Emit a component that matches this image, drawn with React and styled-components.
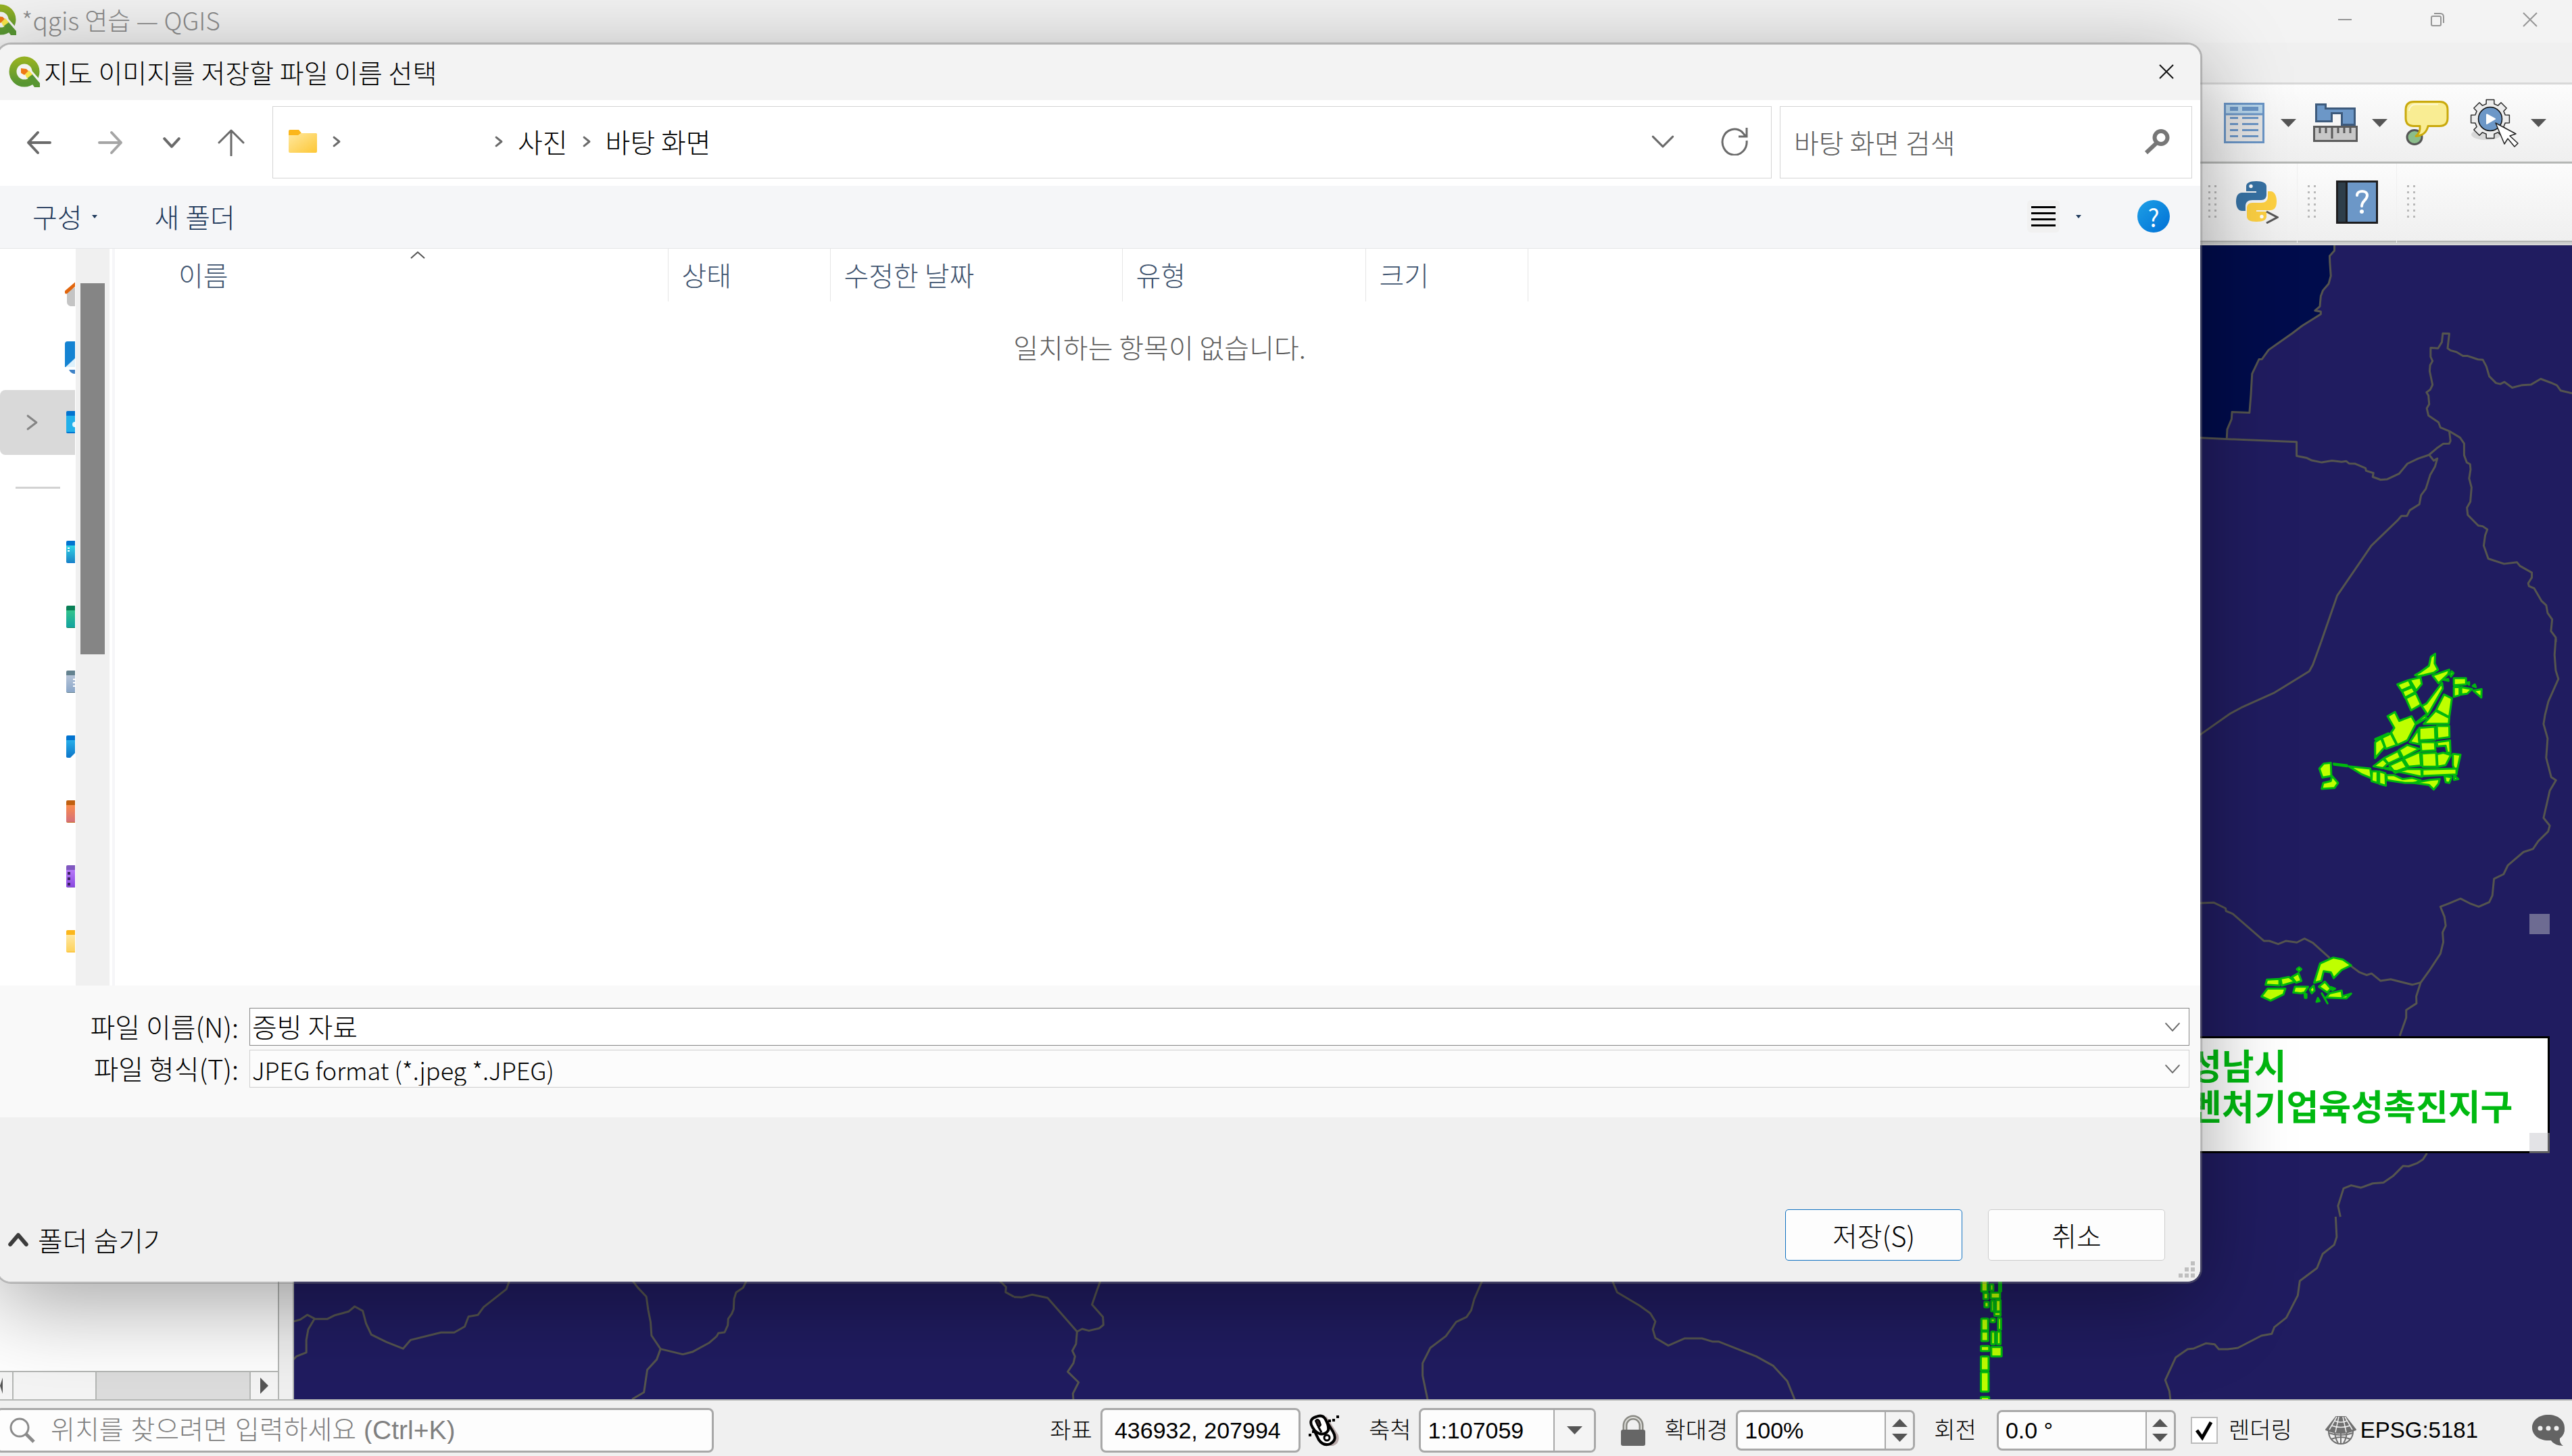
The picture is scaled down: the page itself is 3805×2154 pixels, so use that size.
import React from "react";
import styled, { createGlobalStyle } from "styled-components";

const UI_FONT = `"Noto Sans CJK KR", "Noto Sans", sans-serif`;
const QT_FONT = `"Liberation Sans", "Noto Sans CJK KR", sans-serif`;

const GREY_LINE = "#b5b7b5";
const FIELD_LINE = "#a8a8a8";
const GLYPH = "#6a6a6a";

const GlobalStyle = createGlobalStyle`
  * {
    box-sizing: border-box;
  }

  body {
    margin: 0;
    background: #f0f0f0;
    font-family: ${UI_FONT};
    font-size: 40px;
    font-weight: 300;
    line-height: 56px;
    color: #000;
  }

  button, input, select {
    margin: 0;
    padding: 0;
    border: 0;
    background: none;
    color: inherit;
    font: inherit;
  }

  svg {
    display: block;
    flex: none;
  }
`;

const Page = styled.div`
  position: relative;
  display: flex;
  flex-direction: column;
  min-height: 100vh;
  overflow: hidden;
`;

/* ---------- main window ---------- */

const TitleBar = styled.header`
  display: flex;
  align-items: center;
  height: 63px;
  padding-bottom: 6px;
  background: #f3f3f3;
  color: #8c8c8c;
`;

const MainTitle = styled.h1`
  flex: 1;
  display: flex;
  align-items: center;
  gap: 8px;
  margin: 0 0 0 -22px;
  font-size: 37px;
  font-weight: 300;
`;

const WindowControls = styled.div`
  display: flex;
  gap: 13px;
`;

const WindowButton = styled.button`
  display: flex;
  justify-content: center;
  align-items: center;
  width: ${(props) => props.$width || 124}px;
  height: 56px;
`;

const MenuBar = styled.div`
  height: 62px;
  background: #f0f0f0;
  border-bottom: 3px solid #d8d8d8;
`;

const Toolbar = styled.div`
  display: flex;
  justify-content: flex-end;
  align-items: center;
  gap: 25px;
  height: 117px;
  padding-right: 38px;
  background: linear-gradient(#fcfcfc, #efefef);
  border-bottom: 3px solid ${GREY_LINE};
`;

const ToolGroup = styled.div`
  display: flex;
  align-items: center;
  gap: ${(props) => (props.$last ? 18 : 21)}px;
  margin-left: ${(props) => (props.$last ? 6 : 0)}px;
`;

const IconButton = styled.button`
  display: flex;
  align-items: center;
  justify-content: center;
`;

const PluginBar = styled.div`
  display: flex;
  gap: 1px;
  height: 121px;
  padding-bottom: 1px;
  background: #f0f0f0;
  border-bottom: 3px double ${GREY_LINE};
`;

const PluginSection = styled.div`
  flex: ${(props) => (props.$fill ? "1" : "none")};
  width: ${(props) => props.$width || 146}px;
  display: flex;
  align-items: center;
  justify-content: space-between;
  padding: 0 27px 0 15px;
  background: linear-gradient(#fcfcfc, #efefef);
  border-bottom: 3px solid ${GREY_LINE};
`;

const Body = styled.main`
  flex: 1;
  display: flex;
  min-height: 0;
`;

const LayerPanel = styled.aside`
  display: flex;
  flex-direction: column;
  justify-content: flex-end;
  width: 413px;
  background: #fff;
  border-right: 2px solid ${GREY_LINE};
`;

const Splitter = styled.div`
  width: 22px;
  background: #f0f0f0;
  border-right: 2px solid ${GREY_LINE};
`;

const HScroll = styled.div`
  display: flex;
  height: 42px;
  border-top: 2px solid ${GREY_LINE};
  background: #dcdcdc;
`;

const HScrollThumb = styled.div`
  width: 123px;
  background: #f4f4f4;
  border-right: 2px solid ${GREY_LINE};
`;

const HScrollButton = styled.button`
  display: flex;
  align-items: center;
  justify-content: ${(props) => (props.$left ? "flex-start" : "center")};
  width: ${(props) => (props.$left ? 20 : 42)}px;
  margin-left: ${(props) => (props.$left ? 0 : "auto")};
  background: #f4f4f4;
  border: 0 solid ${GREY_LINE};
  border-width: ${(props) => (props.$left ? "0 2px 0 0" : "0 0 0 2px")};
`;

const MapCanvas = styled.section`
  position: relative;
  flex: 1;
  overflow: hidden;
  background: #201c60;
`;

const MapSvg = styled.svg`
  position: absolute;
  inset: 0;
  width: 100%;
  height: 100%;
`;

const MapLegend = styled.div`
  position: absolute;
  top: 1170px;
  right: 33px;
  width: 560px;
  height: 173px;
  padding: 9px 24px;
  background: #fff;
  border: 3px solid #000;
  color: #00b910;
  font-size: 52px;
  font-weight: 700;
  line-height: 60px;
  white-space: nowrap;
`;

const Handle = styled.i`
  position: absolute;
  right: 33px;
  top: ${(props) => props.$top}px;
  width: 30px;
  height: 30px;
  background: rgba(196, 196, 202, 0.475);
`;

/* ---------- status bar ---------- */

const StatusBar = styled.footer`
  display: flex;
  align-items: center;
  height: 84px;
  padding: 6px 9px 0 0;
  background: #f0f0f0;
  border-top: 2px solid ${GREY_LINE};
  font-family: ${QT_FONT};
  font-size: 34px;
  line-height: 40px;
  white-space: nowrap;
`;

const Framed = styled.div`
  display: flex;
  align-items: stretch;
  width: ${(props) => props.$width}px;
  height: ${(props) => props.$height || 66}px;
  background: #fdfdfd;
  border: 3px solid ${FIELD_LINE};
  border-radius: 8px;
  overflow: hidden;
`;

const Locator = styled(Framed)`
  flex: 0 1 1062px;
  align-items: center;
  gap: 23px;
  margin: 0 auto 0 -6px;
  padding-left: 17px;
  color: #808080;
  font-size: 39px;

  input {
    flex: 1;
    min-width: 0;
  }

  input::placeholder {
    color: #808080;
    opacity: 1;
  }
`;

const StatusItem = styled.div`
  display: flex;
  align-items: center;
  gap: ${(props) => props.$gap || 12}px;
  margin-left: ${(props) => props.$before}px;
`;

const CrsButton = styled.button`
  display: flex;
  align-items: center;
  gap: 6px;
  margin-left: 49px;
  font-size: 33px;
`;

const StatusInput = styled.input`
  flex: 1;
  min-width: 0;
  padding-left: ${(props) => props.$pad || 10}px;
`;

const ScaleSelect = styled.select`
  flex: 1;
  min-width: 0;
  padding-left: 10px;
  appearance: none;
`;

const StepColumn = styled.span`
  display: flex;
  flex-direction: column;
  align-items: center;
  justify-content: center;
  gap: 10px;
  width: ${(props) => props.$width || 42}px;
  border-left: 2px solid ${FIELD_LINE};
  background: #f4f4f4;
`;

const CheckWrap = styled.span`
  position: relative;
  width: 40px;
  height: 40px;

  svg {
    position: absolute;
    inset: 0;
    pointer-events: none;
  }
`;

const CheckInput = styled.input`
  display: block;
  width: 40px;
  height: 40px;
  appearance: none;
  background: #fff;
  border: 2px solid #bcbcbc;
`;

/* ---------- save dialog ---------- */

const Dialog = styled.section`
  position: absolute;
  top: 63px;
  right: 547px;
  bottom: 255px;
  left: -6px;
  display: flex;
  flex-direction: column;
  padding-left: 3px;
  overflow: hidden;
  background: #fff;
  background-clip: padding-box;
  border: 3px solid rgba(110, 110, 110, 0.45);
  border-radius: 22px;
  box-shadow: 0 30px 130px rgba(0, 0, 0, 0.36);
`;

const DialogTitleBar = styled.div`
  display: flex;
  align-items: center;
  justify-content: space-between;
  height: 82px;
  padding: 0 0 2px 13px;
  background: #f3f3f3;
`;

const DialogTitle = styled.h2`
  display: flex;
  align-items: center;
  gap: 6px;
  margin: 0;
  font-size: 39px;
  font-weight: 300;
`;

const NavBar = styled.nav`
  display: flex;
  align-items: center;
  height: 127px;
  padding: 0 12px 2px 5px;
`;

const NavButton = styled.button`
  display: flex;
  align-items: center;
  justify-content: center;
  width: ${(props) => props.$width}px;
  height: 84px;
`;

const AddressBar = styled.div`
  flex: 1;
  display: flex;
  align-items: center;
  height: 107px;
  margin: 0 12px;
  padding: 0 34px 3px 22px;
  border: 1px solid #d4d4d4;
`;

const Crumb = styled.button`
  margin: 0 24px 0 24px;
`;

const CrumbGap = styled.span`
  width: ${(props) => props.$width}px;
`;

const AddressTools = styled.div`
  display: flex;
  align-items: center;
  gap: 71px;
  margin-left: auto;
`;

const SearchBox = styled.label`
  display: flex;
  align-items: center;
  width: 610px;
  height: 107px;
  padding: 0 32px 2px 20px;
  border: 1px solid #d4d4d4;

  input {
    flex: 1;
    min-width: 0;
  }

  input::placeholder {
    color: #5d5d5d;
    opacity: 1;
  }
`;

const CommandBar = styled.div`
  display: flex;
  align-items: center;
  height: 93px;
  padding: 0 45px 2px 48px;
  background: #f5f6f8;
  border-bottom: 1px solid #e4e6e8;
  color: #1e395b;
`;

const CommandButton = styled.button`
  display: flex;
  align-items: center;
  gap: 14px;
  margin-right: 85px;
`;

const ViewButton = styled.button`
  display: flex;
  align-items: center;
  gap: 24px;
  margin: 0 83px 0 auto;

  span {
    display: flex;
    align-items: center;
    justify-content: center;
    width: 48px;
    height: 48px;
    border-radius: 6px;
    background: #f1f1f1;
  }
`;

const HelpButton = styled.button`
  width: 48px;
  height: 48px;
  border-radius: 50%;
  background: linear-gradient(135deg, #1ea0e6, #0070d6);
  color: #fff;
  font-size: 36px;
  font-weight: 400;
  line-height: 48px;
`;

const Explorer = styled.div`
  flex: 1;
  display: flex;
  min-height: 0;
`;

const Places = styled.ul`
  flex: none;
  width: 111px;
  margin: 0 1px 0 0;
  padding: 17px 0 0;
  overflow: hidden;
  list-style: none;
`;

const Place = styled.li`
  display: flex;
  align-items: center;
  justify-content: flex-end;
  height: 96px;
  border-radius: 8px 0 0 8px;
  background: ${(props) => (props.$selected ? "#d9d9d9" : "none")};
  gap: 43px;
`;

const PlaceRule = styled.li`
  height: 96px;
  padding: 47px 22px 0 23px;

  hr {
    height: 3px;
    margin: 0;
    border: 0;
    background: #d2d2d2;
  }
`;

const VScroll = styled.div`
  flex: none;
  width: 50px;
  margin-right: 4px;
  padding: 51px 7px 0;
  background: #f0f0f0;
`;

const VScrollThumb = styled.div`
  height: 549px;
  background: #858585;
`;

const FilePane = styled.div`
  flex: 1;
  border-left: 4px solid #f6f6f8;
`;

const FileTable = styled.table`
  width: 100%;
  table-layout: fixed;
  border-collapse: collapse;

  th {
    position: relative;
    height: 78px;
    padding: 0 0 2px 20px;
    border-right: 1px solid #e5e5e5;
    color: #3f546f;
    font-weight: 300;
    text-align: left;
  }

  th:first-child {
    padding-left: 94px;
  }

  th:last-child {
    border-right: 0;
  }

  td {
    padding: 39px 0 0 6px;
    color: #5d5d5d;
    text-align: center;
  }
`;

const SortMark = styled.svg`
  position: absolute;
  top: 4px;
  left: 437px;
`;

const FieldGrid = styled.div`
  display: grid;
  grid-template-columns: 353px 1fr;
  gap: 6px 16px;
  padding: 33px 16px 44px 0;
  background: #f9f9f9;

  label {
    text-align: right;
    line-height: 54px;
  }
`;

const ComboBox = styled.div`
  position: relative;
  display: flex;
  height: 56px;
  padding-bottom: 2px;
  background: ${(props) => (props.$light ? "#fcfcfc" : "#fff")};
  border: 1px solid ${(props) => (props.$light ? "#cfcfcf" : "#868686")};

  input, select {
    flex: 1;
    padding-left: 3px;
    appearance: none;
  }

  select {
    font-size: 36px;
  }

  svg {
    position: absolute;
    top: 22px;
    right: 14px;
    pointer-events: none;
  }
`;

const DialogFooter = styled.div`
  position: relative;
  display: flex;
  align-items: flex-end;
  height: 243px;
  padding: 0 52px 31px 15px;
  background: #f0f0f0;
`;

const FolderToggle = styled.button`
  display: flex;
  align-items: center;
  gap: 17px;
  margin-right: auto;
  padding-bottom: 3px;

  span {
    width: 180px;
    overflow: hidden;
    text-align: left;
    white-space: nowrap;
  }
`;

const PushButton = styled.button`
  width: 262px;
  height: 76px;
  margin-left: 38px;
  background: #fdfdfd;
  border: 1px solid ${(props) => (props.$primary ? "#0f70c0" : "#cccccc")};
  border-radius: 5px;
`;

const SizeGrip = styled.svg`
  position: absolute;
  right: 8px;
  bottom: 6px;
`;

/* ---------- icons ---------- */

const QgisLogo = ({ id }) => (
  <svg width="46" height="46" viewBox="0 0 46 46">
    <defs>
      <linearGradient id={id} x1="0" y1="0" x2="0" y2="1">
        <stop offset="0" stopColor="#93b023" />
        <stop offset="1" stopColor="#589632" />
      </linearGradient>
    </defs>
    <circle cx="23" cy="23" r="17" fill="none" stroke={`url(#${id})`} strokeWidth="11" />
    <path fill="#f3f3f3" d="M23 24l8-6 15 17v11h-4z" />
    <path fill="#589632" d="M27 31l7-5 12 14v6h-8z" />
    <path fill="#f7e64a" d="M24 27l6-6 5 6-8 6z" />
    <path fill="#ee7913" d="M18 18l8 1 3 3-6 6-5-3z" />
  </svg>
);

const Chevron = ({ dir = "down", width, height, color = GLYPH, stroke = 3 }) => {
  const d = {
    down: "M1 1L50 99L99 1",
    up: "M1 99L50 1L99 99",
    right: "M1 1L99 50L1 99",
  }[dir];
  return (
    <svg width={width} height={height} viewBox="0 0 100 100" preserveAspectRatio="none" overflow="visible">
      <path d={d} fill="none" stroke={color} strokeWidth={stroke} strokeLinecap="round" strokeLinejoin="round" vectorEffect="non-scaling-stroke" />
    </svg>
  );
};

const Triangle = ({ dir = "down", width = 23, height = 12, color = "#555" }) => {
  const points = {
    down: "0,0 100,0 50,100",
    up: "0,100 100,100 50,0",
    right: "0,0 100,50 0,100",
    left: "100,0 100,100 0,50",
  }[dir];
  return (
    <svg width={width} height={height} viewBox="0 0 100 100" preserveAspectRatio="none">
      <polygon points={points} fill={color} />
    </svg>
  );
};

const Arrow = ({ dir, color = GLYPH }) => (
  <svg width="40" height="40" viewBox="0 0 40 40" fill="none" stroke={color} strokeWidth="4" strokeLinecap="round" strokeLinejoin="round">
    {dir === "left" && <path d="M18 5L4 20L18 35M4 20H36" />}
    {dir === "right" && <path d="M22 5L36 20L22 35M36 20H4" />}
    {dir === "up" && <path strokeWidth="3" d="M2 20L20 2L38 20M20 2V39" />}
  </svg>
);

const Cross = ({ color }) => (
  <svg width="22" height="22" viewBox="0 0 22 22" stroke={color} strokeWidth="2">
    <path d="M1 1L21 21M21 1L1 21" />
  </svg>
);

const DragHandle = () => (
  <svg width="13" height="50" viewBox="0 0 13 50" fill="#b9b9b9">
    {[0, 9, 18, 27, 36, 45].map((y) => (
      <path key={y} d={`M0 ${y}h3v3h-3zM9 ${y}h3v3h-3z`} />
    ))}
  </svg>
);

const TableIcon = () => (
  <svg width="66" height="66" viewBox="0 0 66 66">
    <path fill="#e4e4e4" d="M4 4h58v59H4z" />
    <path fill="#b6d4ea" d="M4 4h58v16H4z" />
    <path fill="none" stroke="#6a95c6" strokeWidth="3" d="M4.500 4.500h57v57h-57zM4 20h58" />
    <path fill="#6a95c6" d="M12 9h12v6H12zM30 9h24v6H30zM12 24h12v3H12zM30 24h24v3H30zM12 33h12v3H12zM30 33h24v3H30zM12 42h12v3H12zM30 42h24v3H30zM12 51h12v3H12zM30 51h24v3H30z" />
  </svg>
);

const MeasureIcon = () => (
  <svg width="66" height="66" viewBox="0 0 66 66">
    <path fill="#6c97c7" stroke="#3d5a7c" strokeWidth="3" d="M4.500 5.500h14v6h43v24H42.500V18.500h-15v12h-23z" />
    <path fill="#c8c8c8" stroke="#5b5b5b" strokeWidth="3" d="M1.500 38.500h63v21h-63z" />
    <path stroke="#5b5b5b" strokeWidth="3" d="M10 39v9M19 39v9M28 39v17M37 39v9M46 39v9M55 39v9" />
  </svg>
);

const MapTipIcon = () => (
  <svg width="66" height="66" viewBox="0 0 66 66">
    <ellipse cx="15" cy="54" rx="11" ry="10.500" fill="#8bbd8b" stroke="#555" strokeWidth="3" />
    <path fill="#f9ed93" stroke="#c9a90c" strokeWidth="3" strokeLinejoin="round" d="M14 1.500h38q12 0 12 12v12q0 12-12 12H35q-3 14-18 15q7-5 6-15h-9q-12 0-12-12v-12q0-12 12-12z" />
    <path fill="none" stroke="#fdf8d0" strokeWidth="2" d="M7 15q1-9 9-9.500h34" />
  </svg>
);

const gearPath = (cx, cy, outer, inner, teeth) => {
  const pts = [];
  for (let i = 0; i < teeth; i++) {
    const a = (i / teeth) * Math.PI * 2 - Math.PI / 2;
    [
      [-0.26, inner],
      [-0.2, outer],
      [0.2, outer],
      [0.26, inner],
    ].forEach(([da, r]) => {
      pts.push(`${(cx + Math.cos(a + da) * r).toFixed(1)} ${(cy + Math.sin(a + da) * r).toFixed(1)}`);
    });
  }
  return `M${pts.join("L")}Z`;
};

const ActionIcon = () => (
  <svg width="72" height="72" viewBox="0 0 72 72">
    <ellipse cx="24" cy="53" rx="22" ry="8" fill="#d8d8d8" />
    <path fill="#ececec" stroke="#2c2c2c" strokeWidth="1.500" strokeLinejoin="round" d={gearPath(30, 30, 29, 23, 8)} />
    <circle cx="30" cy="30" r="17.500" fill="#6c97c7" stroke="#111" strokeWidth="1.500" />
    <path fill="#fff" stroke="#fff" strokeWidth="2" strokeLinejoin="round" d="M25 23.500v13.500l12-7z" />
    <path fill="#fff" stroke="#222" strokeWidth="1.500" strokeLinejoin="round" d="M38 36L68 52L59 55L71 66L66 71L56 59L51 67z" />
  </svg>
);

const PythonIcon = () => (
  <svg width="63" height="63" viewBox="0 0 63 63">
    <path fill="#3772a4" d="M30 0C19 0 15 3 15 8v7h15v2H9C3 17 0 22 0 30s3 14 9 14h5v-7c0-6 4-9 10-9h13c5 0 8-3 8-8V8c0-5-5-8-15-8z" />
    <path fill="#fed142" d="M30 60c11 0 15-3 15-8v-7H30v-2h21c6 0 9-5 9-13s-3-15-9-15h-4v8c0 6-4 9-10 9H24c-6 0-8 4-8 8v12c0 5 4 8 14 8z" />
    <circle cx="22" cy="7.500" r="2.700" fill="#fff" />
    <circle cx="38" cy="52.500" r="2.700" fill="#fff" />
    <path fill="none" stroke="#555" strokeWidth="3" d="M45 45l16 8.500L45 62" />
  </svg>
);

const HelpBookIcon = () => (
  <svg width="62" height="64" viewBox="0 0 62 64">
    <path fill="#6c97c7" stroke="#1d1d1f" strokeWidth="3" d="M1.500 1.500h59v61h-59z" />
    <path fill="#2e3e4a" stroke="#1d1d1f" strokeWidth="3" d="M1.500 1.500h14v61h-14z" />
    <path fill="none" stroke="#fff" strokeWidth="4" strokeLinecap="round" d="M31 22c0-8 15-8 15 0c0 7-8 8-8 16" />
    <circle cx="38" cy="46" r="3" fill="#fff" />
  </svg>
);

const FolderIcon = () => (
  <svg width="44" height="36" viewBox="0 0 44 36">
    <defs>
      <linearGradient id="folder" x1="0" y1="0" x2="1" y2="1">
        <stop offset="0" stopColor="#ffe8a0" />
        <stop offset="1" stopColor="#fdc735" />
      </linearGradient>
    </defs>
    <path fill="#fbb61b" d="M1 3q0-2 2-2h13l4 5h20q3 0 3 3v6H1z" />
    <path fill="url(#folder)" d="M1 9h14l4-3h22q2 0 2 2v25q0 2-2 2H3q-2 0-2-2z" />
  </svg>
);

const RefreshIcon = () => (
  <svg width="40" height="42" viewBox="0 0 40 42" fill="none" stroke={GLYPH} strokeWidth="3">
    <path d="M38 20a18 19 0 1 1-7-13l6 7M38 1v13H26" />
  </svg>
);

const SearchKeyIcon = () => (
  <svg width="38" height="38" viewBox="0 0 38 38" fill="none" stroke="#777">
    <circle cx="25" cy="12.500" r="9.500" strokeWidth="6" />
    <path strokeWidth="6" d="M19 20L3 35" />
  </svg>
);

const LensIcon = () => (
  <svg width="38" height="38" viewBox="0 0 38 38" fill="none" stroke="#8a8a8a">
    <circle cx="15" cy="15" r="13" strokeWidth="3" />
    <path strokeWidth="5" d="M24 24L36 36" />
  </svg>
);

const MouseIcon = () => (
  <svg width="46" height="48" viewBox="0 0 46 48">
    <path fill="#b9aaaa" d="M26 3l18 28q3 12-8 16h-14z" />
    <path fill="#fff" stroke="#000" strokeWidth="4" d="M26 10l10 16q7 12-4 18q-10 4-17-6l-6-12z" />
    <path fill="#fff" stroke="#000" strokeWidth="4" d="M4 16q-3-9 7-12q10-4 14 4q5 9 4 16q-4 7-13 5q-8-3-12-13z" />
    <path fill="#2b2020" stroke="#000" strokeWidth="2" d="M10 10q3-4 6 0l2 6q-2 4-5 1z" />
    <path stroke="#000" strokeWidth="3" d="M14 18l5 9" />
    <circle cx="27" cy="35" r="4" fill="#fff" stroke="#000" strokeWidth="3" />
    <path fill="#000" d="M29 8h4v4h-4zM35 7h4v4h-4zM41 2h4v4h-4zM5 24h4v4H5zM0 29h4v4H0z" />
  </svg>
);

const LockIcon = () => (
  <svg width="38" height="46" viewBox="0 0 38 46">
    <path fill="none" stroke="#8a8a84" strokeWidth="7" d="M7 23V16a12 12 0 0 1 24 0v7" />
    <path fill="none" stroke="#dcdcd8" strokeWidth="2" d="M7 23V16a12 12 0 0 1 24 0v7" />
    <rect x="1" y="22" width="36" height="24" rx="3" fill="#666" />
  </svg>
);

const GlobeIcon = () => (
  <svg width="46" height="42" viewBox="0 0 46 42" fill="none" stroke="#707070" strokeWidth="2">
    <ellipse cx="23" cy="23" rx="18" ry="18" />
    <path fill="#707070" d="M16 1h14l15 19q-22 10-44 0z" />
    <path d="M5 25q18 6 36 0M9 34q14-6 28 0M23 22v20M14 22q0 10 5 18M32 22q0 10-5 18" />
    <path stroke="#f0f0f0" strokeWidth="1.500" d="M14 7q9 4 18 0M9 14q14 5 28 0M20 1l-5 23M26 1l5 23M17 1L6 20M29 1l11 19" />
  </svg>
);

const MessageIcon = () => (
  <svg width="50" height="46" viewBox="0 0 50 46">
    <path fill="#636363" d="M24 0C10 0 0 8 0 19s10 19 24 19h4q4 7 18 8q-6-4-5-11q8-6 7-16C48 8 38 0 24 0z" />
    <circle cx="12" cy="20" r="3.500" fill="#f0f0f0" />
    <circle cx="24" cy="20" r="3.500" fill="#f0f0f0" />
    <circle cx="36" cy="20" r="3.500" fill="#f0f0f0" />
  </svg>
);

// only the left edge of each place icon shows beside the scroll bar
const PLACES = [
  { name: "desktop", top: "#0173cf", from: "#2fd3e6", to: "#1a84c6", mark: "M4 13h3v2H4zM4 17h3v2H4z", markColor: "#fff" },
  { name: "downloads", top: "#087f56", from: "#32c38c", to: "#12a3a0" },
  { name: "documents", top: "#64828f", from: "#b6c4d8", to: "#8aa6c8", mark: "M12 15h3v2h-3zM12 20h3v2h-3zM12 25h3v2h-3z", markColor: "#fff" },
  { name: "pictures", top: "#0173cf", from: "#27aee9", to: "#0d77c9", mark: "M8 36L15 29V36z", markColor: "#fff" },
  { name: "music", top: "#c06010", from: "#f98c4d", to: "#d6707a" },
  { name: "videos", top: "#8058c0", from: "#b678f8", to: "#8a48e0", mark: "M4 13h4v4H4zM4 21h4v4H4zM4 29h4v4H4z", markColor: "#3b2560" },
  { name: "folder", top: "#fbb61b", from: "#ffe7a0", to: "#fdd25c" },
];

const PlaceIcon = ({ name, top, from, to, mark, markColor }) => (
  <svg width="14" height="38" viewBox="1 1 14 38">
    <defs>
      <linearGradient id={`place-${name}`} x1="0" y1="0" x2="0" y2="1">
        <stop offset="0" stopColor={from} />
        <stop offset="1" stopColor={to} />
      </linearGradient>
    </defs>
    <rect x="2" y="3" width="30" height="33" rx="2" fill={top} />
    <rect x="2" y="10" width="30" height="25" fill={`url(#place-${name})`} />
    {mark && <path d={mark} fill={markColor} />}
  </svg>
);

/* ---------- map drawing ---------- */

const VIEW = {
  north: "translate(3250 350) scale(0.35398 0.38270)",
  centre: "translate(3250 900) scale(0.35398 0.57405)",
  southEast: "translate(2600 1750) scale(0.76852 0.33333)",
  south: "translate(1500 1860) scale(0.76528 0.33333)",
  southMid: "translate(1060 1890) scale(0.33333)",
  southWest: "translate(0 1460) scale(0.70151 0.44267)",
};

const SEA =
  "M575 34L575 54 555 75 556 100 560 152 551 182 527 208 518 230 514 270 494 286 518 290 518 300 440 345 400 373 300 438 272 474 260 474 231 530 226 610 220 681 147 678 145 706 127 745 125 780";

const BOUNDARIES = {
  north: [
    SEA,
    "M-10 777L210 786 417 794 417 848 460 856 480 865 522 873 565 866 605 871 624 868 636 877 662 878 705 895 707 905 738 914 735 929 768 940 796 938 846 916 880 878 925 858 970 844 1003 818 1030 801 1055 800 1060 790 1055 752",
    "M1055 752L1018 738 1010 718 968 692 961 664 971 648 968 615 960 602 975 592 985 573 973 520 975 497 985 481 977 465 977 430 1008 432 1024 408 1028 374 1055 375 1048 432 1060 440 1085 446 1112 461 1130 461 1175 475 1195 476 1210 502 1222 540 1250 566 1268 570 1285 562 1318 584 1360 574 1397 572 1437 550 1480 565 1505 575 1520 595 1568 606",
    "M1055 752L1100 777 1117 800 1117 845 1128 873 1142 880 1144 900 1138 935 1148 970 1143 1025 1129 1048 1132 1076 1176 1117 1195 1120 1214 1132 1205 1155 1199 1195 1218 1245 1284 1265 1338 1259 1350 1273 1400 1299 1400 1318 1385 1340 1388 1351 1410 1360 1440 1408 1460 1425 1466 1455 1485 1480 1480 1525 1500 1550 1500 1568",
    "M973 846L990 866 1005 858 995 890 975 922 957 975 937 1000 930 1035 890 1058 878 1080 855 1080 838 1098 729 1195 587 1387 519 1568",
  ],
  centre: [
    "M519 87L485 145 470 162 325 217 185 256 140 271 -10 336",
    "M1500 78L1495 120 1500 160 1511 182 1469 240 1455 275 1449 298 1466 335 1460 385 1481 435 1501 443 1475 470 1449 540 1475 560 1468 575 1427 600 1405 620 1365 628 1300 662 1282 685 1242 697 1235 740 1222 757 1178 769 1140 760 1102 748 1055 760 1018 769 1035 795 1040 818 1027 835 1030 860 1018 890 970 935 935 965 917 1000 918 1018 875 1035 875 1055 848 1102",
    "M0 760L70 758 120 773 122 780 150 787 280 857 303 857 340 865 373 857 418 861 450 851 485 862 555 901M640 920L680 938 710 945 730 941 768 960 810 956 900 970 937 964",
    "M962 1404L945 1420 920 1430 885 1438 862 1437 820 1463 780 1480 735 1482 685 1493 645 1487 613 1495 590 1540 600 1568",
  ],
  southEast: [
    "M1113 150L1115 240 1110 275 1088 315 1077 378 1044 435 1040 500 1018 598 995 640 990 670 970 678 925 732 905 738 888 738 880 716 863 712 840 735 828 738 805 775 785 875 793 925 795 965",
  ],
  south: [
    "M168 100L160 150 151 210 172 265 173 300 165 315 145 326 132 318 122 330 65 180 35 166 15 178 0 176",
    "M122 330L120 385 113 415 118 440 115 470 104 508 125 555 114 605 115 635",
    "M906 100L890 185 884 235 875 265 855 287 835 350 805 402 790 470 790 525 800 635",
    "M1156 100L1166 155 1210 215 1230 248 1240 285 1235 320 1240 358 1265 392 1297 360 1330 360 1350 374 1362 374 1435 440 1468 482 1495 550 1510 635",
  ],
  southMid: [
    "M140 0L118 45 87 66 78 95 76 140 68 160 52 183 50 212 36 243 8 247 0 262",
    "M1250 8L1285 42 1283 65 1320 85",
  ],
  southWest: [
    "M610 1122L633 1112 648 1096 665 1110 690 1110 705 1098 735 1085 748 1068 765 1083 772 1125 783 1162 815 1187 850 1209 866 1180 930 1155 958 1155 980 1135 988 1102 1008 1096 1020 1070 1068 1010 1076 975",
    "M663 1110L650 1145 646 1180 646 1222 625 1235 615 1252",
    "M1333 980L1345 1005 1363 1035 1367 1080 1372 1120 1374 1165 1393 1210 1440 1228 1460 1220 1495 1190 1511 1168",
    "M1393 1210L1385 1245 1365 1280 1358 1355 1333 1378",
  ],
};

const PARCELS = [
  "912,172 932,165 970,148 978,125 996,117 994,142 1008,158 990,166 950,172 925,175",
  "985,173 1055,158 1050,170 1010,193",
  "1058,170 1065,162 1073,167 1062,176",
  "1030,184 1050,182 1052,187",
  "838,196 885,185 897,200 855,212",
  "858,214 900,203 912,216 870,230",
  "890,184 935,178 940,195 917,212",
  "873,232 915,219 937,248 895,263",
  "940,252 960,245 1025,192 1028,207 965,275",
  "1074,180 1125,180 1125,196 1074,198",
  "1074,203 1098,203 1098,224 1074,228",
  "1105,203 1150,208 1130,220 1105,222",
  "1130,192 1138,190 1138,197",
  "1153,200 1162,196 1166,203",
  "1155,212 1190,208 1189,230",
  "1033,222 1066,232 1055,280 1000,262",
  "948,298 998,264 1055,282 1053,297",
  "797,278 828,267 846,290 897,278 915,298 880,340 838,352 812,320 825,308",
  "745,345 770,335 785,358 745,386",
  "773,333 810,322 835,352 790,362",
  "745,337 800,322 803,325 750,340",
  "915,295 955,275 960,282 920,297",
  "890,345 925,312 930,350",
  "930,308 995,305 997,338 930,340",
  "1003,303 1055,303 1056,332 1005,336",
  "935,345 995,345 997,366 938,368",
  "1003,345 1058,340 1060,372 1046,372 1040,354 1005,356",
  "738,407 778,388 798,400 778,412",
  "782,386 840,368 852,385 800,400",
  "845,365 880,352 930,362 862,385",
  "805,405 858,390 878,410 825,422",
  "865,388 932,370 937,405 885,408",
  "940,374 1000,372 1003,408 943,408",
  "1003,376 1030,372 1062,378 1040,404 1006,408",
  "1070,375 1102,377 1085,425 1070,405",
  "785,413 810,410 830,424 880,414 938,414 940,434",
  "943,415 1085,413 1085,428 943,432",
  "635,407 725,413 730,438 690,428",
  "732,420 755,420 755,450 730,445",
  "762,420 788,425 790,457 762,452",
  "792,430 825,430 860,440 900,437 935,443 910,450 870,450 795,443",
  "905,450 975,442 1015,440 1010,452 990,467 970,455",
  "1035,433 1065,435 1055,450 1040,448",
  "1075,430 1093,440 1075,442",
  "572,400 628,404 628,407 574,403",
  "512,413 530,400 560,398 562,432 525,436",
  "522,465 528,450 560,445 565,432 590,450 575,463",
  "287,970 293,957 345,955 345,972",
  "350,954 385,950 410,962 355,972",
  "397,950 425,940 437,960 415,965",
  "418,930 427,925 437,930 427,935",
  "270,1000 295,980 370,980 362,995 308,1011",
  "403,990 410,975 465,975 450,990 435,992",
  "450,994 458,994 458,1004 452,1004",
  "472,982 488,972 492,985 480,992",
  "490,965 515,915 570,900 610,905 645,920 605,932 572,953 560,938 530,935 520,960",
  "510,975 535,962 560,980 545,990",
  "540,1003 555,992 605,985 608,1000 645,993 625,1005",
  "500,1014 506,1004 513,1012",
  "522,992 530,1000 546,1018",
  "560,976 578,980 566,984",
];

// [x, y, width, height] of the blocks along the narrow district
const STRIP = [
  [431, 430, 12, 52],
  [448, 450, 6, 28],
  [465, 430, 4, 52],
  [435, 488, 9, 28],
  [449, 487, 18, 26],
  [437, 528, 8, 24],
  [450, 522, 5, 48],
  [459, 520, 9, 50],
  [456, 574, 12, 16],
  [431, 602, 13, 53],
  [449, 602, 8, 16],
  [463, 600, 6, 52],
  [431, 660, 13, 42],
  [450, 660, 7, 56],
  [461, 660, 7, 56],
  [430, 724, 16, 22],
  [450, 728, 20, 42],
  [430, 770, 15, 62],
  [430, 840, 15, 86],
  [430, 950, 16, 16],
];

const Map = () => (
  <MapSvg viewBox="435 363 3370 1707" preserveAspectRatio="xMaxYMid slice">
    <path d={`${SEA}L-3000 777V34Z`} fill="#000c4c" transform={VIEW.north} />
    {Object.keys(BOUNDARIES).map((view) => (
      <g key={view} transform={VIEW[view]} fill="none" stroke="#55554f" strokeWidth="3" strokeLinejoin="round">
        {BOUNDARIES[view].map((d) => (
          <path key={d} d={d} vectorEffect="non-scaling-stroke" />
        ))}
      </g>
    ))}
    <g fill="#bfff00" stroke="#00b80f" strokeWidth="3" strokeLinejoin="round">
      <g transform={VIEW.centre}>
        {PARCELS.map((points) => (
          <polygon key={points} points={points} vectorEffect="non-scaling-stroke" />
        ))}
      </g>
      <g transform={VIEW.southEast}>
        {STRIP.map(([x, y, width, height]) => (
          <rect key={`${x}-${y}`} x={x} y={y} width={width} height={height} rx="2" vectorEffect="non-scaling-stroke" />
        ))}
      </g>
    </g>
  </MapSvg>
);

/* ---------- parts ---------- */

const SaveDialog = () => (
  <Dialog role="dialog" aria-labelledby="dialog-title">
    <DialogTitleBar>
      <DialogTitle id="dialog-title">
        <QgisLogo id="logo-dialog" />
        지도 이미지를 저장할 파일 이름 선택
      </DialogTitle>
      <WindowButton $width={100} aria-label="닫기">
        <Cross color="#111" />
      </WindowButton>
    </DialogTitleBar>

    <NavBar>
      <NavButton $width={106} aria-label="뒤로">
        <Arrow dir="left" />
      </NavButton>
      <NavButton $width={104} aria-label="앞으로">
        <Arrow dir="right" color="#a5a5a5" />
      </NavButton>
      <NavButton $width={78} aria-label="최근 위치">
        <Chevron width={22} height={12} stroke={4} />
      </NavButton>
      <NavButton $width={98} aria-label="위로">
        <Arrow dir="up" />
      </NavButton>
      <AddressBar>
        <FolderIcon />
        <CrumbGap $width={24} />
        <Chevron dir="right" width={8} height={13} />
        <CrumbGap $width={232} />
        <Chevron dir="right" width={8} height={13} />
        <Crumb>사진</Crumb>
        <Chevron dir="right" width={8} height={13} />
        <Crumb>바탕 화면</Crumb>
        <AddressTools>
          <IconButton aria-label="이전 위치">
            <Chevron width={30} height={15} />
          </IconButton>
          <IconButton aria-label="새로 고침">
            <RefreshIcon />
          </IconButton>
        </AddressTools>
      </AddressBar>
      <SearchBox>
        <input type="text" placeholder="바탕 화면 검색" aria-label="바탕 화면 검색" />
        <SearchKeyIcon />
      </SearchBox>
    </NavBar>

    <CommandBar>
      <CommandButton>
        구성
        <Triangle width={8} height={5} color="#1e395b" />
      </CommandButton>
      <CommandButton>새 폴더</CommandButton>
      <ViewButton aria-label="보기">
        <span>
          <svg width="36" height="30" viewBox="0 0 36 30" fill="#000">
            <path d="M0 0h36v3H0zM0 9h36v3H0zM0 18h36v3H0zM0 27h36v3H0z" />
          </svg>
        </span>
        <Triangle width={8} height={5} color="#1e395b" />
      </ViewButton>
      <HelpButton aria-label="도움말">?</HelpButton>
    </CommandBar>

    <Explorer>
      <Places>
        <Place>
          <svg width="15" height="40" viewBox="0 0 15 40">
            <path fill="#c4c4c4" d="M3 19L15 12V40H8q-5-2-5-6z" />
            <path fill="none" stroke="#e2650c" strokeWidth="5" strokeLinecap="round" d="M2 19L17 6" />
          </svg>
        </Place>
        <Place>
          <svg width="15" height="48" viewBox="0 0 15 48">
            <path fill="#1583d2" d="M0 4q0-4 4-4h12v38H0z" />
            <path fill="#dff1fb" d="M1 38L15 25V38z" />
            <path fill="#3f82c6" d="M6 42h9v6q-6 0-9-6z" />
          </svg>
        </Place>
        <Place $selected>
          <Chevron dir="right" width={13} height={20} color="#858585" />
          <svg width="14" height="38" viewBox="1 1 14 38">
            <rect x="2" y="3" width="30" height="33" rx="2" fill="#0173cf" />
            <path fill="#22b0ea" d="M2 10h13v24H2z" />
            <circle cx="15" cy="23" r="4" fill="#e4f5fd" />
          </svg>
        </Place>
        <PlaceRule>
          <hr />
        </PlaceRule>
        {PLACES.map((place) => (
          <Place key={place.name}>
            <PlaceIcon {...place} />
          </Place>
        ))}
      </Places>
      <VScroll>
        <VScrollThumb />
      </VScroll>
      <FilePane>
        <FileTable>
          <colgroup>
            <col width="818" />
            <col width="240" />
            <col width="432" />
            <col width="360" />
            <col width="240" />
            <col />
          </colgroup>
          <thead>
            <tr>
              <th>
                이름
                <SortMark width="22" height="11" viewBox="0 0 22 11" fill="none" stroke="#555" strokeWidth="2">
                  <path d="M1 10L11 1L21 10" />
                </SortMark>
              </th>
              <th>상태</th>
              <th>수정한 날짜</th>
              <th>유형</th>
              <th>크기</th>
              <th />
            </tr>
          </thead>
          <tbody>
            <tr>
              <td colSpan={6}>일치하는 항목이 없습니다.</td>
            </tr>
          </tbody>
        </FileTable>
      </FilePane>
    </Explorer>

    <FieldGrid>
      <label htmlFor="file-name">파일 이름(N):</label>
      <ComboBox>
        <input id="file-name" type="text" defaultValue="증빙 자료" />
        <Chevron width={20} height={11} stroke={2} />
      </ComboBox>
      <label htmlFor="file-type">파일 형식(T):</label>
      <ComboBox $light>
        <select id="file-type">
          <option>JPEG format (*.jpeg *.JPEG)</option>
        </select>
        <Chevron width={20} height={11} stroke={2} />
      </ComboBox>
    </FieldGrid>

    <DialogFooter>
      <FolderToggle>
        <Chevron dir="up" width={24} height={14} color="#3c3c3c" stroke={6} />
        <span>폴더 숨기기</span>
      </FolderToggle>
      <PushButton $primary>저장(S)</PushButton>
      <PushButton>취소</PushButton>
      <SizeGrip width="24" height="24" viewBox="0 0 24 24" fill="#bfbfbf">
        <path d="M18 0h6v6h-6zM9 9h6v6H9zM18 9h6v6h-6zM0 18h6v6H0zM9 18h6v6H9zM18 18h6v6h-6z" />
      </SizeGrip>
    </DialogFooter>
  </Dialog>
);

const Spinner = ({ id, value, width, height }) => (
  <Framed $width={width} $height={height}>
    <StatusInput id={id} type="text" defaultValue={value} />
    <StepColumn>
      <Triangle dir="up" />
      <Triangle />
    </StepColumn>
  </Framed>
);

const Status = () => (
  <StatusBar>
    <Locator as="label">
      <LensIcon />
      <input type="text" placeholder="위치를 찾으려면 입력하세요 (Ctrl+K)" aria-label="위치 찾기" />
    </Locator>
    <StatusItem $before={0}>
      <label htmlFor="coord">좌표</label>
      <Framed $width={296}>
        <StatusInput id="coord" type="text" $pad={18} defaultValue="436932, 207994" />
      </Framed>
      <IconButton aria-label="범위 전환">
        <MouseIcon />
      </IconButton>
    </StatusItem>
    <StatusItem $before={43}>
      <label htmlFor="scale">축척</label>
      <Framed $width={262}>
        <ScaleSelect id="scale">
          <option>1:107059</option>
        </ScaleSelect>
        <StepColumn $width={60}>
          <Triangle />
        </StepColumn>
      </Framed>
    </StatusItem>
    <StatusItem $before={36}>
      <IconButton aria-label="축척 잠금">
        <LockIcon />
      </IconButton>
    </StatusItem>
    <StatusItem $before={27}>
      <label htmlFor="zoom">확대경</label>
      <Spinner id="zoom" value="100%" width={265} height={60} />
    </StatusItem>
    <StatusItem $before={28} $gap={30}>
      <label htmlFor="rotation">회전</label>
      <Spinner id="rotation" value="0.0 °" width={265} height={60} />
    </StatusItem>
    <StatusItem $before={22} $gap={16}>
      <CheckWrap>
        <CheckInput id="render" type="checkbox" defaultChecked />
        <svg width="40" height="40" viewBox="0 0 40 40" fill="none" stroke="#000" strokeWidth="5">
          <path d="M9 20L17 31L30 8" />
        </svg>
      </CheckWrap>
      <label htmlFor="render">렌더링</label>
    </StatusItem>
    <CrsButton>
      <GlobeIcon />
      EPSG:5181
    </CrsButton>
    <StatusItem $before={80}>
      <IconButton aria-label="메시지">
        <MessageIcon />
      </IconButton>
    </StatusItem>
  </StatusBar>
);

const App = () => (
  <>
    <GlobalStyle />
    <Page>
      <TitleBar>
        <MainTitle>
          <QgisLogo id="logo-main" />
          *qgis 연습 — QGIS
        </MainTitle>
        <WindowControls>
          <WindowButton aria-label="최소화">
            <svg width="20" height="20" viewBox="0 0 20 20" stroke="#959595" strokeWidth="2">
              <path d="M0 10h20" />
            </svg>
          </WindowButton>
          <WindowButton aria-label="이전 크기로">
            <svg width="20" height="20" viewBox="0 0 20 20" fill="none" stroke="#959595" strokeWidth="2">
              <rect x="1" y="5" width="14" height="14" rx="2" />
              <path d="M5 1h9q5 0 5 5v9" />
            </svg>
          </WindowButton>
          <WindowButton aria-label="닫기">
            <Cross color="#959595" />
          </WindowButton>
        </WindowControls>
      </TitleBar>
      <MenuBar />
      <Toolbar>
        <ToolGroup>
          <IconButton aria-label="속성 테이블">
            <TableIcon />
          </IconButton>
          <Triangle />
        </ToolGroup>
        <ToolGroup>
          <IconButton aria-label="측정">
            <MeasureIcon />
          </IconButton>
          <Triangle />
        </ToolGroup>
        <IconButton aria-label="맵 도움말">
          <MapTipIcon />
        </IconButton>
        <ToolGroup $last>
          <IconButton aria-label="액션 실행">
            <ActionIcon />
          </IconButton>
          <Triangle />
        </ToolGroup>
      </Toolbar>
      <PluginBar>
        <PluginSection $fill />
        <PluginSection>
          <DragHandle />
          <IconButton aria-label="파이썬 콘솔">
            <PythonIcon />
          </IconButton>
        </PluginSection>
        <PluginSection>
          <DragHandle />
          <IconButton aria-label="도움말 목차">
            <HelpBookIcon />
          </IconButton>
        </PluginSection>
        <PluginSection $width={259}>
          <DragHandle />
        </PluginSection>
      </PluginBar>

      <Body>
        <LayerPanel>
          <HScroll>
            <HScrollButton $left aria-label="왼쪽으로">
              <Triangle dir="left" width={4} height={24} />
            </HScrollButton>
            <HScrollThumb />
            <HScrollButton aria-label="오른쪽으로">
              <Triangle dir="right" width={12} height={24} />
            </HScrollButton>
          </HScroll>
        </LayerPanel>
        <Splitter />
        <MapCanvas>
          <Map />
          <MapLegend>
            <div>성남시</div>
            <div>벤처기업육성촉진지구</div>
          </MapLegend>
          <Handle $top={989} />
          <Handle $top={1313} />
        </MapCanvas>
      </Body>

      <Status />
      <SaveDialog />
    </Page>
  </>
);

export default App;
